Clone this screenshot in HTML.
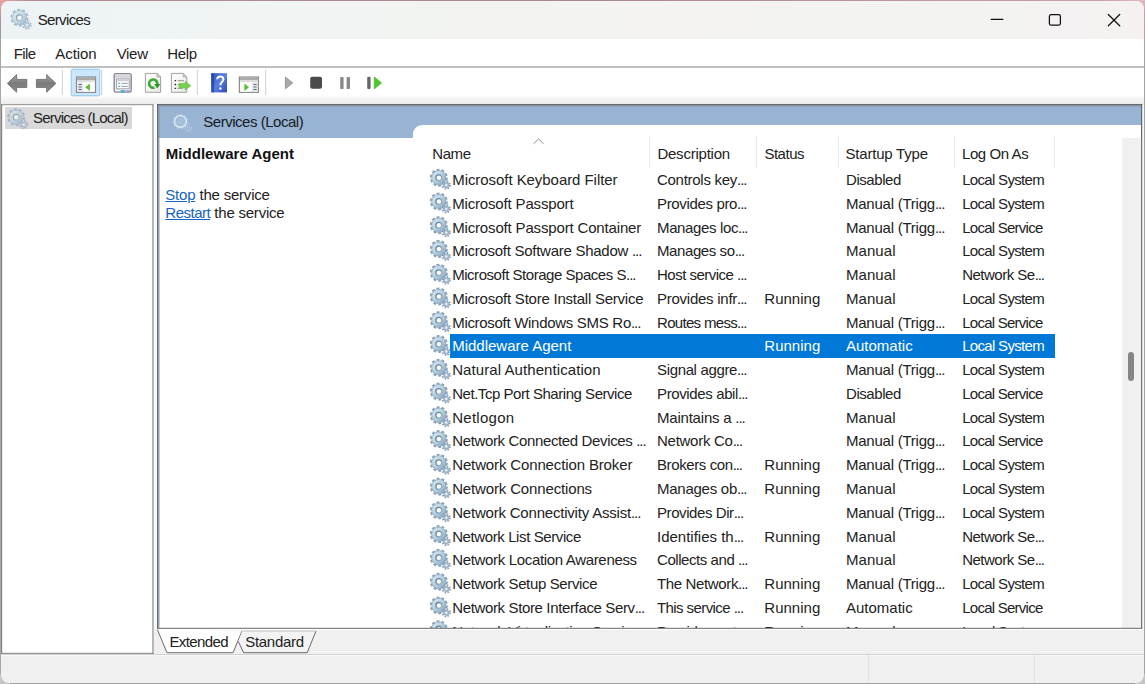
<!DOCTYPE html>
<html><head><meta charset="utf-8"><title>Services</title>
<style>
html,body{margin:0;padding:0}
body{width:1145px;height:684px;overflow:hidden;position:relative;background:#a2a2a2;font-family:"Liberation Sans",sans-serif;font-size:15px;color:#1a1a1a}
.abs,.t,.g,.ic{position:absolute}
.t{white-space:pre;line-height:normal;color:#222}
#bgtop{left:0;top:0;width:1145px;height:3px;background:linear-gradient(90deg,#e8a39c 0,#b08c92 30px,#a58a90 600px,#c9a0a8 1100px,#e3b9c1 1145px)}
#bgleft{left:0;top:0;width:3px;height:684px;background:linear-gradient(180deg,#e8a39c 0,#a39296 25px,#a9a7a8 60px,#a8a8a8 684px)}
#bgright{left:1142px;top:0;width:3px;height:60px;background:linear-gradient(180deg,#e3b9c1 0,#c9a0a8 12px,#a2a2a2 60px)}
#bgbl{left:0;top:674px;width:10px;height:10px;background:#c4c4c4}
#bgbr{left:1135px;top:674px;width:10px;height:10px;background:#c4c4c4}
#win{left:1px;top:1px;width:1143px;height:681.6px;border-radius:8px;background:#f0f0f0;overflow:hidden}
#title{left:0;top:0;width:1143px;height:38px;background:linear-gradient(90deg,#edf3f5 0,#f1f4f2 350px,#f4f3ef 650px,#f3f3f2 1000px,#f5f1f1 1143px)}
#menu{left:0;top:38px;width:1143px;height:28px;background:#fff}
#menuline{left:0;top:65.4px;width:1143px;height:1.6px;background:#c0c0c0}
#tool{left:0;top:67px;width:1143px;height:37px;background:linear-gradient(180deg,#fff 0,#fff 27px,#f4f4f4 31px,#ebebeb 37px)}
#tree{left:2px;top:105px;width:151px;height:548px;background:#fff}
#treesel{left:5px;top:107px;width:127px;height:22px;background:#d9d9d9}
#panel4{left:158px;top:105px;width:984px;height:523px;background:#fff}
#hdr{left:158px;top:105px;width:984px;height:33px;background:#99b4d2}
#listbg{left:412.5px;top:124.6px;width:728.7px;height:503.2px;background:#fff;border-top-left-radius:9px}
#list{left:0;top:0;width:1141.2px;height:627.8px;overflow:hidden}
#sel{left:450.2px;top:334.4px;width:604.8px;height:23.3px;background:#0078d7}
.cs{width:1px;top:136px;height:31.5px;background:#eaeaea}
#sbar{left:1121.5px;top:137.8px;width:19.7px;height:490px;background:#f0f0f0}
#thumb{left:1127.6px;top:351.8px;width:6px;height:29px;border-radius:3px;background:#868686}
#stline{left:0;top:653px;width:1145px;height:1px;background:#d2d2d2;box-shadow:0 1px 0 #f9f9f9}
.sd{width:1px;top:655px;height:28px;background:#e3e3e3}
.g{width:22px;height:22px}
svg{overflow:visible}
</style></head><body>
<svg width="0" height="0" style="position:absolute">
<defs>
<linearGradient id="gg" x1="0" y1="0" x2="1" y2="1"><stop offset="0" stop-color="#cfe3ef"/><stop offset="0.5" stop-color="#b6d0e1"/><stop offset="1" stop-color="#90abc3"/></linearGradient>
<linearGradient id="gh" x1="0" y1="0" x2="1" y2="1"><stop offset="0" stop-color="#5f7589"/><stop offset="1" stop-color="#9fbbcf"/></linearGradient>
<symbol id="gear" viewBox="0 0 22 22">
<circle cx="9.2" cy="9.2" r="7.8" fill="none" stroke="#8aa1b6" stroke-width="2.4" stroke-dasharray="2.9 2.0"/>
<circle cx="9.2" cy="9.2" r="5.1" fill="none" stroke="url(#gg)" stroke-width="4.4"/>
<circle cx="9.2" cy="9.2" r="7.1" fill="none" stroke="#90a8bc" stroke-width="0.8"/>
<circle cx="9.2" cy="9.2" r="2.9" fill="#fbfdff" stroke="url(#gh)" stroke-width="1.3"/>
<circle cx="16.7" cy="16.6" r="3.6" fill="none" stroke="#889fb5" stroke-width="2" stroke-dasharray="1.5 1.33"/>
<circle cx="16.7" cy="16.6" r="2.3" fill="#bfd5e6" stroke="#9ab2c7" stroke-width="1.4"/>
<circle cx="16.7" cy="16.6" r="0.9" fill="#eef6fb"/>
</symbol>
<symbol id="gearw" viewBox="0 0 22 22">
<circle cx="9.2" cy="9.2" r="7.4" fill="none" stroke="#afc6e0" stroke-width="1.6" stroke-dasharray="2.4 1.9" opacity=".75"/>
<circle cx="9.2" cy="9.2" r="5.9" fill="#a4bdda" stroke="#d6e5f3" stroke-width="1.7"/>
<circle cx="9.2" cy="9.2" r="2.2" fill="none" stroke="#b3c9e2" stroke-width="0.8" opacity=".7"/>
<circle cx="17.2" cy="16.4" r="2.9" fill="none" stroke="#b9cde4" stroke-width="1.5" stroke-dasharray="1.2 1.1" opacity=".8"/>
<circle cx="17.2" cy="16.4" r="1.5" fill="none" stroke="#b4cae2" stroke-width="0.8" opacity=".8"/>
</symbol>
</defs></svg>
<div class="abs" id="bgtop"></div><div class="abs" id="bgleft"></div><div class="abs" id="bgright"></div><div class="abs" id="bgbl"></div><div class="abs" id="bgbr"></div>
<div class="abs" id="win">
<div class="abs" id="title"></div>
<div class="abs" id="menu"></div><div class="abs" id="menuline"></div>
<div class="abs" id="tool"></div>
<div class="abs" id="stline"></div>
</div>
<!-- panels (page coords) -->
<div class="abs" id="tree"></div>
<div class="abs" id="treesel"></div>
<div class="abs" id="panel4"></div>
<div class="abs" id="hdr"></div>
<div class="abs" id="listbg"></div>
<div class="abs" id="sbar"></div><div class="abs" id="thumb"></div>
<div class="abs cs" style="left:649px"></div><div class="abs cs" style="left:756.3px"></div><div class="abs cs" style="left:838.2px"></div><div class="abs cs" style="left:954.2px"></div><div class="abs cs" style="left:1054.3px"></div>
<div class="abs sd" style="left:868.2px"></div><div class="abs sd" style="left:1034px"></div>
<div class="abs" id="list">
<div class="abs" id="sel"></div>
<svg class='abs' style='left:0;top:0' width='1145' height='684' viewBox='0 0 1145 684'><use href='#gear' x='429.6' y='168.50' width='22' height='22'/><use href='#gear' x='429.6' y='192.26' width='22' height='22'/><use href='#gear' x='429.6' y='216.02' width='22' height='22'/><use href='#gear' x='429.6' y='239.78' width='22' height='22'/><use href='#gear' x='429.6' y='263.54' width='22' height='22'/><use href='#gear' x='429.6' y='287.30' width='22' height='22'/><use href='#gear' x='429.6' y='311.06' width='22' height='22'/><use href='#gear' x='429.6' y='334.82' width='22' height='22'/><use href='#gear' x='429.6' y='358.58' width='22' height='22'/><use href='#gear' x='429.6' y='382.34' width='22' height='22'/><use href='#gear' x='429.6' y='406.10' width='22' height='22'/><use href='#gear' x='429.6' y='429.86' width='22' height='22'/><use href='#gear' x='429.6' y='453.62' width='22' height='22'/><use href='#gear' x='429.6' y='477.38' width='22' height='22'/><use href='#gear' x='429.6' y='501.14' width='22' height='22'/><use href='#gear' x='429.6' y='524.90' width='22' height='22'/><use href='#gear' x='429.6' y='548.66' width='22' height='22'/><use href='#gear' x='429.6' y='572.42' width='22' height='22'/><use href='#gear' x='429.6' y='596.18' width='22' height='22'/><use href='#gear' x='429.6' y='619.94' width='22' height='22'/></svg>
<span class='t' style='left:452.2px;top:171.10px;font-size:15px;letter-spacing:-0.056px;'>Microsoft Keyboard Filter</span>
<span class='t' style='left:657.0px;top:171.10px;font-size:15px;letter-spacing:-0.278px;'>Controls key<span style='letter-spacing:-1.05px'>...</span></span>
<span class='t' style='left:846.0px;top:171.10px;font-size:15px;letter-spacing:-0.439px;'>Disabled</span>
<span class='t' style='left:962.2px;top:171.10px;font-size:15px;letter-spacing:-0.686px;'>Local System</span>
<span class='t' style='left:452.2px;top:194.86px;font-size:15px;letter-spacing:-0.166px;'>Microsoft Passport</span>
<span class='t' style='left:657.0px;top:194.86px;font-size:15px;letter-spacing:-0.348px;'>Provides pro<span style='letter-spacing:-1.05px'>...</span></span>
<span class='t' style='left:846.0px;top:194.86px;font-size:15px;letter-spacing:-0.234px;'>Manual (Trigg<span style='letter-spacing:-1.05px'>...</span></span>
<span class='t' style='left:962.2px;top:194.86px;font-size:15px;letter-spacing:-0.686px;'>Local System</span>
<span class='t' style='left:452.2px;top:218.62px;font-size:15px;letter-spacing:-0.16px;'>Microsoft Passport Container</span>
<span class='t' style='left:657.0px;top:218.62px;font-size:15px;letter-spacing:-0.366px;'>Manages loc<span style='letter-spacing:-1.05px'>...</span></span>
<span class='t' style='left:846.0px;top:218.62px;font-size:15px;letter-spacing:-0.234px;'>Manual (Trigg<span style='letter-spacing:-1.05px'>...</span></span>
<span class='t' style='left:962.2px;top:218.62px;font-size:15px;letter-spacing:-0.746px;'>Local Service</span>
<span class='t' style='left:452.2px;top:242.38px;font-size:15px;letter-spacing:-0.27px;'>Microsoft Software Shadow <span style='letter-spacing:-1.05px'>...</span></span>
<span class='t' style='left:657.0px;top:242.38px;font-size:15px;letter-spacing:-0.408px;'>Manages so<span style='letter-spacing:-1.05px'>...</span></span>
<span class='t' style='left:846.0px;top:242.38px;font-size:15px;letter-spacing:0.059px;'>Manual</span>
<span class='t' style='left:962.2px;top:242.38px;font-size:15px;letter-spacing:-0.686px;'>Local System</span>
<span class='t' style='left:452.2px;top:266.14px;font-size:15px;letter-spacing:-0.465px;'>Microsoft Storage Spaces S<span style='letter-spacing:-1.05px'>...</span></span>
<span class='t' style='left:657.0px;top:266.14px;font-size:15px;letter-spacing:-0.512px;'>Host service <span style='letter-spacing:-1.05px'>...</span></span>
<span class='t' style='left:846.0px;top:266.14px;font-size:15px;letter-spacing:0.059px;'>Manual</span>
<span class='t' style='left:962.2px;top:266.14px;font-size:15px;letter-spacing:-0.509px;'>Network Se<span style='letter-spacing:-1.05px'>...</span></span>
<span class='t' style='left:452.2px;top:289.90px;font-size:15px;letter-spacing:-0.234px;'>Microsoft Store Install Service</span>
<span class='t' style='left:657.0px;top:289.90px;font-size:15px;letter-spacing:-0.256px;'>Provides infr<span style='letter-spacing:-1.05px'>...</span></span>
<span class='t' style='left:764.3px;top:289.90px;font-size:15px;letter-spacing:0.018px;'>Running</span>
<span class='t' style='left:846.0px;top:289.90px;font-size:15px;letter-spacing:0.059px;'>Manual</span>
<span class='t' style='left:962.2px;top:289.90px;font-size:15px;letter-spacing:-0.686px;'>Local System</span>
<span class='t' style='left:452.2px;top:313.66px;font-size:15px;letter-spacing:-0.297px;'>Microsoft Windows SMS Ro<span style='letter-spacing:-1.05px'>...</span></span>
<span class='t' style='left:657.0px;top:313.66px;font-size:15px;letter-spacing:-0.682px;'>Routes mess<span style='letter-spacing:-1.05px'>...</span></span>
<span class='t' style='left:846.0px;top:313.66px;font-size:15px;letter-spacing:-0.234px;'>Manual (Trigg<span style='letter-spacing:-1.05px'>...</span></span>
<span class='t' style='left:962.2px;top:313.66px;font-size:15px;letter-spacing:-0.746px;'>Local Service</span>
<span class='t' style='left:452.2px;top:337.42px;font-size:15px;letter-spacing:-0.003px;color:#fff'>Middleware Agent</span>
<span class='t' style='left:764.3px;top:337.42px;font-size:15px;letter-spacing:0.018px;color:#fff'>Running</span>
<span class='t' style='left:846.0px;top:337.42px;font-size:15px;letter-spacing:-0.0px;color:#fff'>Automatic</span>
<span class='t' style='left:962.2px;top:337.42px;font-size:15px;letter-spacing:-0.686px;color:#fff'>Local System</span>
<span class='t' style='left:452.2px;top:361.18px;font-size:15px;letter-spacing:0.078px;'>Natural Authentication</span>
<span class='t' style='left:657.0px;top:361.18px;font-size:15px;letter-spacing:-0.349px;'>Signal aggre<span style='letter-spacing:-1.05px'>...</span></span>
<span class='t' style='left:846.0px;top:361.18px;font-size:15px;letter-spacing:-0.234px;'>Manual (Trigg<span style='letter-spacing:-1.05px'>...</span></span>
<span class='t' style='left:962.2px;top:361.18px;font-size:15px;letter-spacing:-0.686px;'>Local System</span>
<span class='t' style='left:452.2px;top:384.94px;font-size:15px;letter-spacing:-0.459px;'>Net.Tcp Port Sharing Service</span>
<span class='t' style='left:657.0px;top:384.94px;font-size:15px;letter-spacing:-0.373px;'>Provides abil<span style='letter-spacing:-1.05px'>...</span></span>
<span class='t' style='left:846.0px;top:384.94px;font-size:15px;letter-spacing:-0.439px;'>Disabled</span>
<span class='t' style='left:962.2px;top:384.94px;font-size:15px;letter-spacing:-0.746px;'>Local Service</span>
<span class='t' style='left:452.2px;top:408.70px;font-size:15px;letter-spacing:0.265px;'>Netlogon</span>
<span class='t' style='left:657.0px;top:408.70px;font-size:15px;letter-spacing:-0.211px;'>Maintains a <span style='letter-spacing:-1.05px'>...</span></span>
<span class='t' style='left:846.0px;top:408.70px;font-size:15px;letter-spacing:0.059px;'>Manual</span>
<span class='t' style='left:962.2px;top:408.70px;font-size:15px;letter-spacing:-0.686px;'>Local System</span>
<span class='t' style='left:452.2px;top:432.46px;font-size:15px;letter-spacing:-0.361px;'>Network Connected Devices <span style='letter-spacing:-1.05px'>...</span></span>
<span class='t' style='left:657.0px;top:432.46px;font-size:15px;letter-spacing:-0.272px;'>Network Co<span style='letter-spacing:-1.05px'>...</span></span>
<span class='t' style='left:846.0px;top:432.46px;font-size:15px;letter-spacing:-0.234px;'>Manual (Trigg<span style='letter-spacing:-1.05px'>...</span></span>
<span class='t' style='left:962.2px;top:432.46px;font-size:15px;letter-spacing:-0.746px;'>Local Service</span>
<span class='t' style='left:452.2px;top:456.22px;font-size:15px;letter-spacing:-0.134px;'>Network Connection Broker</span>
<span class='t' style='left:657.0px;top:456.22px;font-size:15px;letter-spacing:-0.401px;'>Brokers con<span style='letter-spacing:-1.05px'>...</span></span>
<span class='t' style='left:764.3px;top:456.22px;font-size:15px;letter-spacing:0.018px;'>Running</span>
<span class='t' style='left:846.0px;top:456.22px;font-size:15px;letter-spacing:-0.234px;'>Manual (Trigg<span style='letter-spacing:-1.05px'>...</span></span>
<span class='t' style='left:962.2px;top:456.22px;font-size:15px;letter-spacing:-0.686px;'>Local System</span>
<span class='t' style='left:452.2px;top:479.98px;font-size:15px;letter-spacing:-0.149px;'>Network Connections</span>
<span class='t' style='left:657.0px;top:479.98px;font-size:15px;letter-spacing:-0.252px;'>Manages ob<span style='letter-spacing:-1.05px'>...</span></span>
<span class='t' style='left:764.3px;top:479.98px;font-size:15px;letter-spacing:0.018px;'>Running</span>
<span class='t' style='left:846.0px;top:479.98px;font-size:15px;letter-spacing:0.059px;'>Manual</span>
<span class='t' style='left:962.2px;top:479.98px;font-size:15px;letter-spacing:-0.686px;'>Local System</span>
<span class='t' style='left:452.2px;top:503.74px;font-size:15px;letter-spacing:-0.203px;'>Network Connectivity Assist<span style='letter-spacing:-1.05px'>...</span></span>
<span class='t' style='left:657.0px;top:503.74px;font-size:15px;letter-spacing:-0.421px;'>Provides Dir<span style='letter-spacing:-1.05px'>...</span></span>
<span class='t' style='left:846.0px;top:503.74px;font-size:15px;letter-spacing:-0.234px;'>Manual (Trigg<span style='letter-spacing:-1.05px'>...</span></span>
<span class='t' style='left:962.2px;top:503.74px;font-size:15px;letter-spacing:-0.686px;'>Local System</span>
<span class='t' style='left:452.2px;top:527.50px;font-size:15px;letter-spacing:-0.401px;'>Network List Service</span>
<span class='t' style='left:657.0px;top:527.50px;font-size:15px;letter-spacing:-0.006px;'>Identifies th<span style='letter-spacing:-1.05px'>...</span></span>
<span class='t' style='left:764.3px;top:527.50px;font-size:15px;letter-spacing:0.018px;'>Running</span>
<span class='t' style='left:846.0px;top:527.50px;font-size:15px;letter-spacing:0.059px;'>Manual</span>
<span class='t' style='left:962.2px;top:527.50px;font-size:15px;letter-spacing:-0.509px;'>Network Se<span style='letter-spacing:-1.05px'>...</span></span>
<span class='t' style='left:452.2px;top:551.26px;font-size:15px;letter-spacing:-0.331px;'>Network Location Awareness</span>
<span class='t' style='left:657.0px;top:551.26px;font-size:15px;letter-spacing:-0.437px;'>Collects and <span style='letter-spacing:-1.05px'>...</span></span>
<span class='t' style='left:846.0px;top:551.26px;font-size:15px;letter-spacing:0.059px;'>Manual</span>
<span class='t' style='left:962.2px;top:551.26px;font-size:15px;letter-spacing:-0.509px;'>Network Se<span style='letter-spacing:-1.05px'>...</span></span>
<span class='t' style='left:452.2px;top:575.02px;font-size:15px;letter-spacing:-0.359px;'>Network Setup Service</span>
<span class='t' style='left:657.0px;top:575.02px;font-size:15px;letter-spacing:-0.363px;'>The Network<span style='letter-spacing:-1.05px'>...</span></span>
<span class='t' style='left:764.3px;top:575.02px;font-size:15px;letter-spacing:0.018px;'>Running</span>
<span class='t' style='left:846.0px;top:575.02px;font-size:15px;letter-spacing:-0.234px;'>Manual (Trigg<span style='letter-spacing:-1.05px'>...</span></span>
<span class='t' style='left:962.2px;top:575.02px;font-size:15px;letter-spacing:-0.686px;'>Local System</span>
<span class='t' style='left:452.2px;top:598.78px;font-size:15px;letter-spacing:-0.358px;'>Network Store Interface Serv<span style='letter-spacing:-1.05px'>...</span></span>
<span class='t' style='left:657.0px;top:598.78px;font-size:15px;letter-spacing:-0.581px;'>This service <span style='letter-spacing:-1.05px'>...</span></span>
<span class='t' style='left:764.3px;top:598.78px;font-size:15px;letter-spacing:0.018px;'>Running</span>
<span class='t' style='left:846.0px;top:598.78px;font-size:15px;letter-spacing:-0.0px;'>Automatic</span>
<span class='t' style='left:962.2px;top:598.78px;font-size:15px;letter-spacing:-0.746px;'>Local Service</span>
<span class='t' style='left:452.2px;top:622.54px;font-size:15px;letter-spacing:-0.399px;'>Network Virtualization Service</span>
<span class='t' style='left:657.0px;top:622.54px;font-size:15px;letter-spacing:-0.312px;'>Provides net<span style='letter-spacing:-1.05px'>...</span></span>
<span class='t' style='left:764.3px;top:622.54px;font-size:15px;letter-spacing:0.018px;'>Running</span>
<span class='t' style='left:846.0px;top:622.54px;font-size:15px;letter-spacing:0.059px;'>Manual</span>
<span class='t' style='left:962.2px;top:622.54px;font-size:15px;letter-spacing:-0.686px;'>Local System</span>
</div>
<svg class="abs" style="left:0;top:0" width="1145" height="684" viewBox="0 0 1145 684">
<defs>
<linearGradient id="arw" x1="0" y1="0" x2="0" y2="1"><stop offset="0" stop-color="#a6a6a6"/><stop offset="0.5" stop-color="#7a7a7a"/><stop offset="1" stop-color="#8e8e8e"/></linearGradient>
<linearGradient id="hlp" x1="0" y1="0" x2="1" y2="1"><stop offset="0" stop-color="#2d4fc0"/><stop offset="0.5" stop-color="#5d80e0"/><stop offset="1" stop-color="#2a49b4"/></linearGradient>
<linearGradient id="pg" x1="0" y1="0" x2="1" y2="1"><stop offset="0" stop-color="#ffffff"/><stop offset="1" stop-color="#e9e9e4"/></linearGradient>
</defs>
<!-- panel borders -->
<g shape-rendering="auto">
<rect x="153.6" y="104.2" width="3.6" height="525.6" fill="#f7f9fb"/>
<rect x="1142.2" y="104.2" width="1.3" height="525.8" fill="#fff"/>
<rect x="157.2" y="628.8" width="986.3" height="1.2" fill="#fff"/>
<rect x="157.2" y="104.2" width="985" height="1" fill="#4a4e52"/>
<rect x="157.2" y="104.2" width="1" height="524.6" fill="#4a4e52"/>
<rect x="158.2" y="105.2" width="983" height="1.25" fill="#8492a0"/>
<rect x="158.2" y="105.2" width="1.25" height="522.6" fill="#8492a0"/>
<rect x="1141.2" y="104.2" width="1" height="524.6" fill="#4f5357"/>
<rect x="157.2" y="627.8" width="985" height="1" fill="#6a6a6a"/>
<!-- tree borders -->
<rect x="1" y="104.2" width="152.7" height="1" fill="#8e8e8e"/>
<rect x="1" y="104.2" width="1.2" height="549.6" fill="#858585"/>
<rect x="152.2" y="104.2" width="1.5" height="549.6" fill="#a3a3a3"/>
<rect x="1" y="652.8" width="152.7" height="1.1" fill="#8a8a8a"/>
</g>
<!-- title controls -->
<g stroke="#111" stroke-width="1.25" fill="none" stroke-linecap="round">
<path d="M991.2 19.4H1002.8"/>
<rect x="1049.4" y="14.6" width="11" height="10.6" rx="1.8"/>
<path d="M1108.3 14.5L1119.7 25.8M1119.7 14.5L1108.3 25.8"/>
</g>
<!-- toolbar -->
<g>
<path d="M7.4 83.4L16.6 74.6V79.4H26.8V87.4H16.6V92.2Z" fill="url(#arw)" stroke="#6f6f6f" stroke-width="0.9" stroke-linejoin="round"/>
<path d="M55.9 83.4L46.7 74.6V79.4H36.4V87.4H46.7V92.2Z" fill="url(#arw)" stroke="#6f6f6f" stroke-width="0.9" stroke-linejoin="round"/>
<rect x="61.8" y="70" width="1" height="25" fill="#cfcfcf"/>
<rect x="71.2" y="69.2" width="28.6" height="26.6" rx="1.5" fill="#cce6fb" stroke="#8cc6f3" stroke-width="1"/>
<rect x="101.2" y="70" width="1" height="25" fill="#cfcfcf"/>
<!-- show/hide console tree icon -->
<g>
<rect x="76.5" y="77" width="19" height="15.4" fill="#f4f4f4" stroke="#8c8c8c" stroke-width="1.2"/>
<rect x="77.1" y="77.6" width="17.8" height="2.6" fill="#a9a9a9"/>
<rect x="77.1" y="80.2" width="17.8" height="1.6" fill="#d9d9d9"/>
<rect x="77.6" y="82.4" width="5" height="9.4" fill="#e2e6ea"/>
<path d="M78.6 84.5h3.2M78.6 87h3.2M78.6 89.5h3.2" stroke="#5b6b85" stroke-width="1"/>
<rect x="83.8" y="82.6" width="10.6" height="9" fill="#ffffff"/>
<path d="M89.8 83.4V91L85.2 87.2Z" fill="#56bd38"/>
</g>
<!-- properties icon -->
<g>
<rect x="114.2" y="73.6" width="17" height="18.5" rx="1.6" fill="#f1f1f3" stroke="#878790" stroke-width="1.4"/>
<rect x="115.2" y="74.6" width="15" height="3.6" fill="#d6d6dc"/>
<rect x="116.6" y="79" width="12.6" height="9.8" fill="#fcfcfc" stroke="#9a9aa4" stroke-width="0.9"/>
<rect x="117.1" y="79.5" width="11.6" height="1.8" fill="#cfcfd6"/>
<path d="M121.4 83.4h6.4M121.4 86.4h6.4" stroke="#9aa0aa" stroke-width="1"/>
<path d="M118.4 83.4h1.7M118.4 86.4h1.7" stroke="#3fb8c8" stroke-width="1.3"/>
<rect x="120.6" y="90" width="4.6" height="2.3" fill="#4fb3d6"/><rect x="126.4" y="90.2" width="3.4" height="2.1" fill="#b597ce"/>
</g>
<!-- refresh -->
<g>
<path d="M145.4 73.4H157L160.6 77V92.3H145.4Z" fill="url(#pg)" stroke="#a0a0a0" stroke-width="1"/>
<path d="M157 73.4V77H160.6Z" fill="#d4d4d4" stroke="#a0a0a0" stroke-width="0.7"/>
<circle cx="153.2" cy="83.6" r="4.1" fill="none" stroke="#3aa835" stroke-width="2.7" stroke-dasharray="21.3 4.5" transform="rotate(72 153.2 83.6)"/>
<path d="M154.2 84.1H160.4L157.3 88.6Z" fill="#2c9428"/>
</g>
<!-- export list -->
<g>
<path d="M171.4 73.4H183.2L186.8 77V92.3H171.4Z" fill="url(#pg)" stroke="#a0a0a0" stroke-width="1"/>
<path d="M183.2 73.4V77H186.8Z" fill="#d4d4d4" stroke="#a0a0a0" stroke-width="0.7"/>
<path d="M174.6 80.6h1.5M174.6 84.5h1.5M174.6 88.4h1.5" stroke="#2d2d2d" stroke-width="1.4"/>
<path d="M177.6 80.6h6.4M177.6 84.5h3M177.6 88.4h5.4" stroke="#a9a996" stroke-width="1.2"/>
<path d="M179 83.6H185.2V81.3L190.9 85.7L185.2 90.1V87.8H179Z" fill="#74d14c" stroke="#58b838" stroke-width="0.5"/>
</g>
<rect x="196.8" y="70" width="1" height="25" fill="#cfcfcf"/>
<!-- help -->
<g>
<rect x="211.2" y="73.2" width="15.8" height="19.2" fill="url(#hlp)"/>
<rect x="211.2" y="73.2" width="3" height="19.2" fill="#2440a8" opacity=".7"/>
<path d="M217.2 79.2C217.2 75.4 223.4 75.6 223.4 79.2C223.4 81.8 220.4 82 220.4 85.2" fill="none" stroke="#fff" stroke-width="2"/>
<circle cx="220.4" cy="88.6" r="1.25" fill="#fff"/>
</g>
<!-- action pane icon -->
<g>
<rect x="239.4" y="77" width="19" height="15.4" fill="#f4f4f4" stroke="#8c8c8c" stroke-width="1.2"/>
<rect x="240" y="77.6" width="17.8" height="2.6" fill="#a9a9a9"/>
<rect x="240" y="80.2" width="17.8" height="1.6" fill="#d9d9d9"/>
<rect x="252.4" y="82.4" width="5" height="9.4" fill="#e2e6ea"/>
<path d="M253.4 84.5h3.2M253.4 87h3.2M253.4 89.5h3.2" stroke="#5b6b85" stroke-width="1"/>
<rect x="240.4" y="82.6" width="10.8" height="9" fill="#ffffff"/>
<path d="M244.4 83.4V91L249 87.2Z" fill="#56bd38"/>
</g>
<rect x="265.2" y="70" width="1" height="25" fill="#cfcfcf"/>
<!-- play / stop / pause / restart -->
<path d="M285.4 77V88.8L292.8 82.9Z" fill="#a8a8a8" stroke="#8e8e8e" stroke-width="0.8" stroke-linejoin="round"/>
<rect x="310.2" y="76.8" width="11.8" height="12" rx="2" fill="#4a4a4a"/>
<rect x="340.2" y="77" width="3.4" height="12" rx="0.8" fill="#8a8a8a"/><rect x="346.6" y="77" width="3.4" height="12" rx="0.8" fill="#8a8a8a"/>
<rect x="367.2" y="76.8" width="3.4" height="12.2" rx="1" fill="#666"/>
<path d="M374.2 76.8V89L381.6 82.9Z" fill="#4fc82a" stroke="#44b524" stroke-width="0.6" stroke-linejoin="round"/>
</g>
<!-- sort arrow -->
<path d="M533.6 143.8L538.6 139L543.6 143.8" fill="none" stroke="#8e8e8e" stroke-width="1"/>
<!-- tabs -->
<path d="M157.4 629.6L167 652.7H233L242 631" fill="#fff" stroke="none"/>
<path d="M157.4 629.6L167 652.7H233L242 631" fill="none" stroke="#6a6a6a" stroke-width="1"/>
<path d="M238.4 641.6L243.6 652.7H307.2L316 631H242.2" fill="#f3f3f3" stroke="none"/>
<path d="M238.4 641.6L243.6 652.7H307.2L316 631" fill="none" stroke="#6a6a6a" stroke-width="1"/>
<path d="M242.4 631H316" fill="none" stroke="#c4c4c4" stroke-width="1"/>
</svg>
<svg class="abs" style="left:0;top:0" width="400" height="140" viewBox="0 0 400 140">
<use href="#gear" x="10.3" y="8.5" width="22" height="22" opacity=".7"/>
<use href="#gear" x="7" y="108" width="22" height="22" opacity=".62"/>
<use href="#gearw" x="171.2" y="112.2" width="22" height="22"/>
</svg>

<span class='t' style='left:37.7px;top:11.00px;font-size:15px;letter-spacing:-0.647px;'>Services</span>
<span class='t' style='left:13.7px;top:44.80px;font-size:15px;letter-spacing:-0.591px;'>File</span>
<span class='t' style='left:55.3px;top:44.80px;font-size:15px;letter-spacing:-0.061px;'>Action</span>
<span class='t' style='left:116.7px;top:44.80px;font-size:15px;letter-spacing:-0.317px;'>View</span>
<span class='t' style='left:167.3px;top:44.80px;font-size:15px;letter-spacing:-0.353px;'>Help</span>
<span class='t' style='left:33.1px;top:109.40px;font-size:15px;letter-spacing:-0.803px;'>Services (Local)</span>
<span class='t' style='left:203.3px;top:113.00px;font-size:15px;letter-spacing:-0.476px;color:#141a26'>Services (Local)</span>
<span class='t' style='left:165.8px;top:144.50px;font-size:15px;letter-spacing:0.027px;font-weight:bold;color:#111'>Middleware Agent</span>
<span class='t' style='left:165.3px;top:185.90px;font-size:15px;letter-spacing:-0.22px;color:#1565c0;text-decoration:underline'>Stop</span>
<span class='t' style='left:199.5px;top:185.90px;font-size:15px;letter-spacing:-0.215px;'>the service</span>
<span class='t' style='left:165.3px;top:204.40px;font-size:15px;letter-spacing:-0.493px;color:#1565c0;text-decoration:underline'>Restart</span>
<span class='t' style='left:214.3px;top:204.40px;font-size:15px;letter-spacing:-0.215px;'>the service</span>
<span class='t' style='left:432.3px;top:144.80px;font-size:15px;letter-spacing:-0.439px;'>Name</span>
<span class='t' style='left:657.4px;top:144.80px;font-size:15px;letter-spacing:-0.223px;'>Description</span>
<span class='t' style='left:764.4px;top:144.80px;font-size:15px;letter-spacing:-0.486px;'>Status</span>
<span class='t' style='left:845.5px;top:144.80px;font-size:15px;letter-spacing:-0.207px;'>Startup Type</span>
<span class='t' style='left:962.0px;top:144.80px;font-size:15px;letter-spacing:-0.42px;'>Log On As</span>
<span class='t' style='left:169.4px;top:633.40px;font-size:15px;letter-spacing:-0.599px;'>Extended</span>
<span class='t' style='left:245.2px;top:633.40px;font-size:15px;letter-spacing:-0.284px;'>Standard</span>
</body></html>
